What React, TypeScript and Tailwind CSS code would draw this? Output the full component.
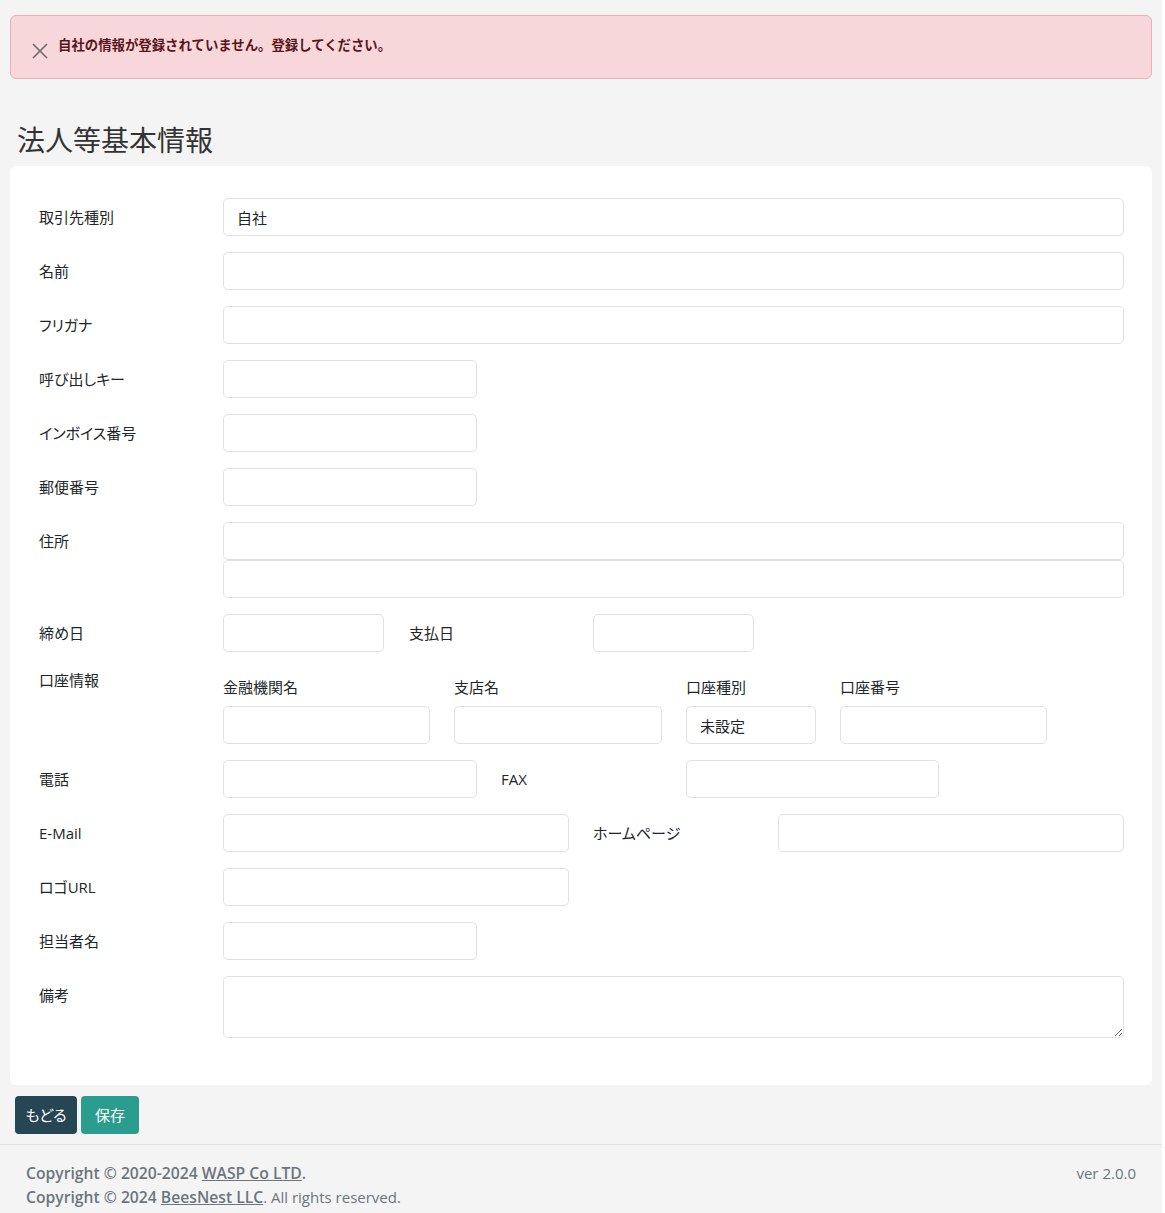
import React from "react";

const font = "font-['Segoe_UI','Open_Sans','Noto_Sans_CJK_JP',sans-serif]";
const inputCls =
  "h-[38px] rounded-[5px] border border-[#dee2e6] bg-white px-[13px] text-[15px] text-[#212529] outline-none";

const Label = ({
  children,
  className = "",
  top = "pt-[7px]",
}: {
  children: React.ReactNode;
  className?: string;
  top?: string;
}) => (
  <div className={`w-[184px] shrink-0 ${top} text-[15px] leading-[24px] text-[#212529] [font-feature-settings:'palt'] ${className}`}>
    {children}
  </div>
);

const Field = ({ w, value }: { w: string; value?: string }) => (
  <input className={`${inputCls} ${w}`} defaultValue={value} />
);

const Row = ({ label, children }: { label: string; children: React.ReactNode }) => (
  <div className="mb-[16px] flex">
    <Label>{label}</Label>
    <div className="flex flex-1 items-start">{children}</div>
  </div>
);

const CloseIcon = () => (
  <svg width="18" height="18" viewBox="0 0 18 18" className="shrink-0">
    <path d="M2 2 L16 16 M16 2 L2 16" stroke="#6b6b6b" strokeWidth="1.6" fill="none" />
  </svg>
);

export default function App() {
  return (
    <div className={`min-h-screen w-[1162px] bg-[#f4f4f4] ${font}`}>
      <div className="px-[10px] pt-[15px]">
        <div className="flex h-[64px] items-center rounded-[6px] border border-[#f1aeb5] bg-[#f8d7da] pl-[20px]">
          <div className="mt-[8px]">
            <CloseIcon />
          </div>
          <p className="mb-[4px] ml-[9px] text-[13.4px] font-bold text-[#58151c]">
            自社の情報が登録されていません。登録してください。
          </p>
        </div>
      </div>

      <div className="flex h-[87px] items-end px-[17px] pb-[9px]">
        <h2 className="text-[28px] leading-[34px] text-[#333]">法人等基本情報</h2>
      </div>

      <div className="mx-[10px] rounded-[6px] bg-white pl-[29px] pr-[28px] pt-[32px] pb-[31px]">
        <Row label="取引先種別">
          <Field w="flex-1" value="自社" />
        </Row>
        <Row label="名前">
          <Field w="flex-1" />
        </Row>
        <Row label="フリガナ">
          <Field w="flex-1" />
        </Row>
        <Row label="呼び出しキー">
          <Field w="w-[254px]" />
        </Row>
        <Row label="インボイス番号">
          <Field w="w-[254px]" />
        </Row>
        <Row label="郵便番号">
          <Field w="w-[254px]" />
        </Row>
        <Row label="住所">
          <div className="flex flex-1 flex-col">
            <Field w="w-full" />
            <Field w="w-full" />
          </div>
        </Row>
        <Row label="締め日">
          <Field w="w-[161px]" />
          <Label className="ml-[25px]">支払日</Label>
          <Field w="w-[161px]" />
        </Row>

        <div className="mb-[16px] flex">
          <Label top="pt-0">口座情報</Label>
          <div className="flex gap-[24px] pt-[7px]">
            {[
              { t: "金融機関名", w: "w-[207px]" },
              { t: "支店名", w: "w-[208px]" },
              { t: "口座種別", w: "w-[130px]", v: "未設定" },
              { t: "口座番号", w: "w-[207px]" },
            ].map((c) => (
              <div key={c.t} className="flex flex-col">
                <span className="mb-[7px] text-[15px] leading-[24px] text-[#212529]">{c.t}</span>
                <Field w={c.w} value={c.v} />
              </div>
            ))}
          </div>
        </div>

        <Row label="電話">
          <Field w="w-[254px]" />
          <Label className="ml-[24px] w-[185px]">FAX</Label>
          <Field w="w-[253px]" />
        </Row>
        <Row label="E-Mail">
          <Field w="w-[346px]" />
          <Label className="ml-[24px] w-[185px]">ホームページ</Label>
          <Field w="flex-1" />
        </Row>
        <Row label="ロゴURL">
          <Field w="w-[346px]" />
        </Row>
        <Row label="担当者名">
          <Field w="w-[254px]" />
        </Row>
        <Row label="備考">
          <textarea className="block h-[62px] flex-1 rounded-[5px] border border-[#dee2e6] px-[13px] py-[6px] text-[15px] outline-none" />
        </Row>
      </div>

      <div className="flex gap-[4px] px-[15px] pt-[11px] pb-[10px]">
        <button className="h-[38px] w-[62px] rounded-[4px] bg-[#264653] text-[15px] text-white [font-feature-settings:'palt']">
          もどる
        </button>
        <button className="h-[38px] w-[58px] rounded-[4px] bg-[#2a9d8f] text-[15px] text-white">保存</button>
      </div>

      <footer className="flex justify-between border-t border-[#dee2e6] pt-[16px] pb-[4px] pl-[26px] pr-[26px] text-[15px] leading-[24px] text-[#6c757d]">
        <div>
          <div className="text-[15.7px] font-semibold">
            Copyright © 2020-2024 <a className="underline">WASP Co LTD</a>.
          </div>
          <div>
            <span className="text-[15.7px] font-semibold">
              Copyright © 2024 <a className="underline">BeesNest LLC</a>
            </span>
            . All rights reserved.
          </div>
        </div>
        <div>ver 2.0.0</div>
      </footer>
    </div>
  );
}
